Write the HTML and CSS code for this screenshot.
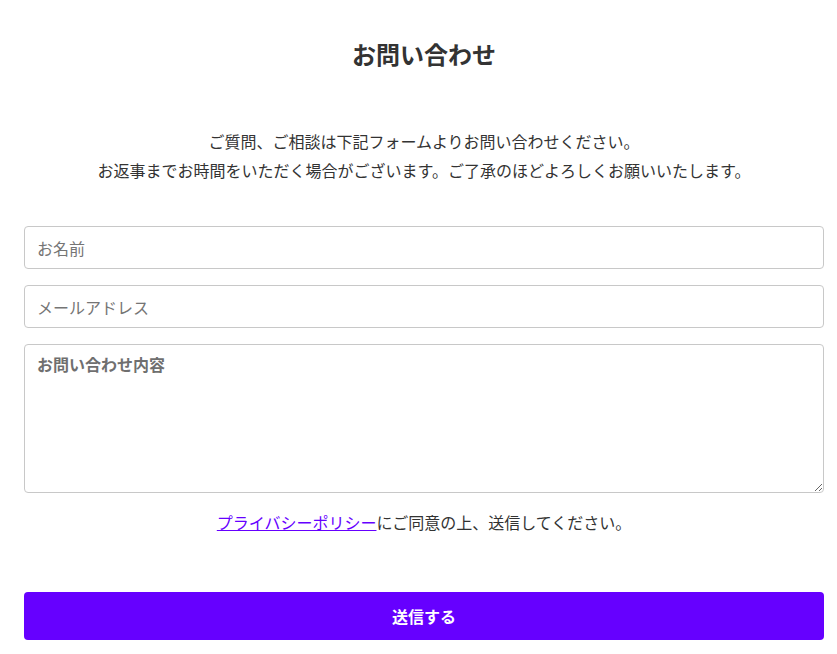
FILE: index.html
```html
<html>
  <head>
    <meta charset="utf-8">
    <link rel="stylesheet" href="styles.css">
  </head>
  <body>
    <div class="contact">
      <h1 class="title">お問い合わせ</h1>
      <p class="lead">
        ご質問、ご相談は下記フォームよりお問い合わせください。<br>
        お返事までお時間をいただく場合がございます。ご了承のほどよろしくお願いいたします。
      </p>
      <form class="form">
        <input class="field" type="text" placeholder="お名前">
        <input class="field" type="email" placeholder="メールアドレス">
        <textarea class="field area" placeholder="お問い合わせ内容"></textarea>
        <p class="agree"><a href="#">プライバシーポリシー</a>にご同意の上、送信してください。</p>
        <button class="submit" type="button">送信する</button>
      </form>
    </div>
  </body>
</html>
```
FILE: styles.css
```css
body {
  margin: 0;
  background: #fff;
  color: #333;
  font-family: "Noto Sans CJK JP", "Noto Sans", sans-serif;
}

.contact {
  width: 800px;
  padding: 0 24px;
}

.title {
  margin: 0;
  padding-top: 36px;
  font-size: 24px;
  line-height: 36px;
  font-weight: 700;
  text-align: center;
}

.lead {
  margin: 55px 0 0;
  font-size: 16px;
  line-height: 29px;
  text-align: center;
}

.form {
  display: flex;
  flex-direction: column;
  gap: 16px;
  margin-top: 41px;
}

.field {
  box-sizing: border-box;
  width: 100%;
  height: 43px;
  padding: 0 12px;
  border: 1px solid #c8c8c8;
  border-radius: 4px;
  font-family: inherit;
  font-size: 16px;
  color: #333;
}

.field::placeholder {
  color: #757575;
}

.area {
  height: 149px;
  padding-top: 7px;
  resize: vertical;
}

.area::placeholder {
  font-weight: 700;
  color: #6f6f6f;
}

.agree {
  margin: 0;
  font-size: 16px;
  line-height: 26px;
  text-align: center;
}

.agree a {
  color: #6600ff;
}

.submit {
  margin-top: 41px;
  height: 48px;
  border: none;
  border-radius: 4px;
  background: #6600ff;
  color: #fff;
  font-family: inherit;
  font-size: 16px;
  font-weight: 700;
}
```
